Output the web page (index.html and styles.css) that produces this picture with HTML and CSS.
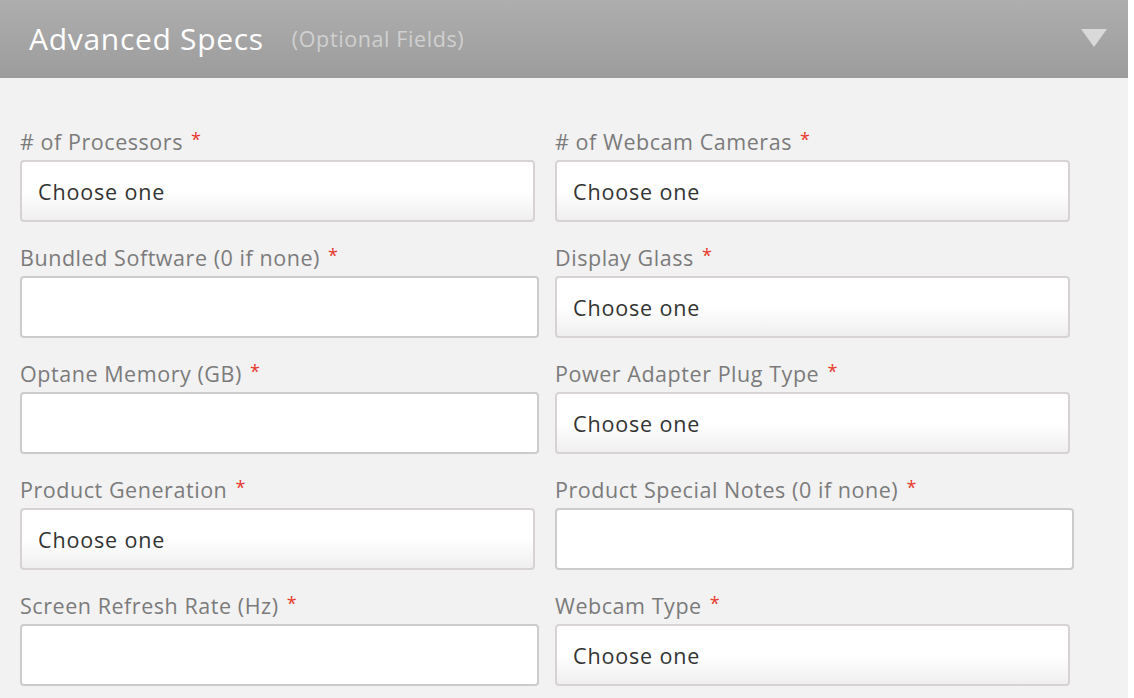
FILE: index.html
```html
<!DOCTYPE html>
<html lang="en">
<head>
    <meta charset="UTF-8">
    <meta name="viewport" content="width=device-width, initial-scale=1.0">
    <title>Advanced Specs</title>
    <link rel="stylesheet" href="styles.css">
</head>
<body>
    <div class="panel">
        <header class="panel-head">
            <h2>Advanced Specs</h2>
            <span class="optional">(Optional Fields)</span>
            <span class="toggle"></span>
        </header>
        <form class="spec-form">
            <div class="field">
                <label># of Processors <span class="req">*</span></label>
                <select class="pick"><option>Choose one</option></select>
            </div>
            <div class="field">
                <label># of Webcam Cameras <span class="req">*</span></label>
                <select class="pick"><option>Choose one</option></select>
            </div>
            <div class="field">
                <label>Bundled Software (0 if none) <span class="req">*</span></label>
                <input type="text" class="text">
            </div>
            <div class="field">
                <label>Display Glass <span class="req">*</span></label>
                <select class="pick"><option>Choose one</option></select>
            </div>
            <div class="field">
                <label>Optane Memory (GB) <span class="req">*</span></label>
                <input type="text" class="text">
            </div>
            <div class="field">
                <label>Power Adapter Plug Type <span class="req">*</span></label>
                <select class="pick"><option>Choose one</option></select>
            </div>
            <div class="field">
                <label>Product Generation <span class="req">*</span></label>
                <select class="pick"><option>Choose one</option></select>
            </div>
            <div class="field">
                <label>Product Special Notes (0 if none) <span class="req">*</span></label>
                <input type="text" class="text">
            </div>
            <div class="field">
                <label>Screen Refresh Rate (Hz) <span class="req">*</span></label>
                <input type="text" class="text">
            </div>
            <div class="field">
                <label>Webcam Type <span class="req">*</span></label>
                <select class="pick"><option>Choose one</option></select>
            </div>
        </form>
    </div>
</body>
</html>
```

FILE: styles.css
```css
/* General */
html {
    background-color: #ffffff;
}

body {
    margin: 0;
    font-family: 'Open Sans', Lato, sans-serif;
    color: #333333;
}

.panel {
    width: 1128px;
    height: 698px;
    overflow: hidden;
    background-color: #f2f2f2;
}

/* Header bar */
.panel-head {
    height: 78px;
    display: flex;
    align-items: center;
    padding: 0 21px 0 29px;
    box-sizing: border-box;
    background: linear-gradient(#aeaeae, #9c9c9c);
}

.panel-head h2 {
    margin: 0 0 2px;
    font-size: 30px;
    font-weight: normal;
    color: #ffffff;
    letter-spacing: 0.7px;
}

.optional {
    margin-left: 28px;
    margin-bottom: 2px;
    font-size: 21.5px;
    letter-spacing: 0.6px;
    color: #d0d0d0;
}

.toggle {
    margin-left: auto;
    margin-bottom: 2px;
    width: 0;
    height: 0;
    border-left: 13px solid transparent;
    border-right: 13px solid transparent;
    border-top: 18px solid #d9d9d9;
}

/* Form grid */
.spec-form {
    display: grid;
    grid-template-columns: 519px 519px;
    column-gap: 16px;
    padding: 52px 0 0 20px;
}

.field {
    display: flex;
    flex-direction: column;
    margin-bottom: 24px;
}

.field label {
    height: 30px;
    line-height: 24px;
    font-size: 21.5px;
    letter-spacing: 0.55px;
    color: #7b7b7b;
}

.req {
    margin-left: 2px;
    color: #e8392b;
    font-size: 18px;
    vertical-align: top;
    line-height: 19px;
}

.pick,
.text {
    height: 62px;
    box-sizing: border-box;
    border-radius: 4px;
    font-family: inherit;
    font-size: 21.5px;
    letter-spacing: 0.85px;
    margin: 0;
}

.pick {
    width: 515px;
    padding: 0 16px;
    border: 2px solid #d7d3d4;
    color: #333333;
    appearance: none;
    -webkit-appearance: none;
    background: linear-gradient(#ffffff 50%, #efefef);
}

.text {
    width: 519px;
    padding: 0 16px;
    border: 2px solid #cccccc;
    background-color: #ffffff;
}
```
